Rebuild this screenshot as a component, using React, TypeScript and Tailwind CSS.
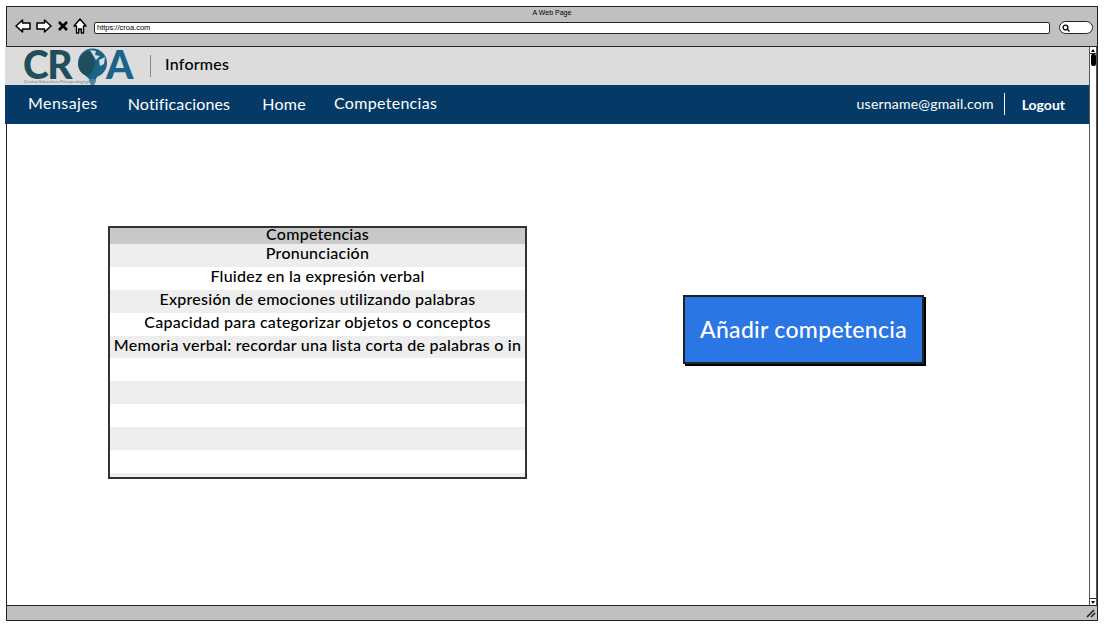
const rows = [
  "Pronunciación",
  "Fluidez en la expresión verbal",
  "Expresión de emociones utilizando palabras",
  "Capacidad para categorizar objetos o conceptos",
  "Memoria verbal: recordar una lista corta de palabras o in",
  "",
  "",
  "",
  "",
  "",
];

function BrowserIcons() {
  return (
    <div className="-mt-[4px] flex items-center text-black">
      <svg width="16" height="14" viewBox="0 0 16 14" fill="white" stroke="black" strokeWidth="1.5">
        <path d="M1 7 L7.5 1 V4 H15 V10 H7.5 V13 Z" strokeLinejoin="round" />
      </svg>
      <svg width="16" height="14" viewBox="0 0 16 14" fill="white" stroke="black" strokeWidth="1.5" className="ml-[5px]">
        <path d="M15 7 L8.5 1 V4 H1 V10 H8.5 V13 Z" strokeLinejoin="round" />
      </svg>
      <svg width="10" height="10" viewBox="0 0 10 10" stroke="black" strokeWidth="2.6" className="ml-[6px]">
        <path d="M1 1 L9 9 M9 1 L1 9" />
      </svg>
      <svg width="14" height="16" viewBox="0 0 14 16" fill="white" stroke="black" strokeWidth="1.4" className="ml-[5px]">
        <path d="M7 1 L13 8 H10.5 V15 H8.3 V11 H5.7 V15 H3.5 V8 H1 Z" strokeLinejoin="round" />
      </svg>
    </div>
  );
}

function LogoGlobe() {
  return (
    <svg width="31" height="38" viewBox="0 0 31 38" className="-mt-[3px] ml-[6px] mr-[-2px] shrink-0 self-start">
      <circle cx="15.5" cy="16" r="14.5" fill="#1b6488" />
      <path d="M1.5 18 C1.5 10 6 5 11 4 C16 8 19 14 17 21 C15 26 12 30 8 28 C4 26 1.5 23 1.5 18 Z" fill="#1f4f5a" />
      <path d="M13 3 L19 4 L18 8 L23 9 L19 13 L16 8 Z M22 13 L28 10 L27 17 L23 19 Z" fill="#dcdcdc" />
      <path d="M9 29 L21 28 L19 32 L12 32 Z" fill="#1b6488" />
      <path d="M12 33 H19 M12.5 35 H18.5 M13.5 37 H17.5" stroke="#1b6488" strokeWidth="1.3" />
    </svg>
  );
}

export default function App() {
  return (
    <div className="h-[626px] w-[1105px] overflow-hidden bg-white pl-[6px] pr-[7px] pt-[6px] font-['Lato',sans-serif] text-black">
      <div className="flex h-[615px] w-[1092px] flex-col border-[1.5px] border-[#222]">
        {/* browser chrome */}
        <div className="h-[40px] shrink-0 border-b-[1.5px] border-[#222] bg-[#c0c0c0]">
          <p className="pt-[1px] text-center font-['Liberation_Sans',sans-serif] text-[7px] leading-[9px]">A Web Page</p>
          <div className="flex items-center pl-[8px] pr-[4px] pt-[4px]">
            <BrowserIcons />
            <div className="ml-[7px] flex h-[12px] w-[957px] items-center rounded-[2px] border-[1.5px] border-[#222] bg-white pl-[2px] font-['Liberation_Sans',sans-serif] text-[7.5px]">
              https://croa.com
            </div>
            <div className="ml-[9px] flex h-[13px] w-[34px] items-center rounded-full border-[1.5px] border-[#222] bg-white pl-[2px]">
              <svg width="8" height="8" viewBox="0 0 8 8" fill="none" stroke="black" strokeWidth="1.3">
                <circle cx="3.5" cy="3.5" r="2.4" />
                <path d="M5.3 5.3 L7.5 7.5" />
              </svg>
            </div>
          </div>
        </div>

        <div className="flex min-h-0 flex-1">
          <div className="flex min-w-0 flex-1 flex-col">
            {/* header */}
            <div className="-ml-[2px] flex h-[38px] shrink-0 items-center bg-[#dcdcdc] pl-[18px]">
              <div className="relative flex h-[38px] w-[111px] items-start pt-[3px] text-[39px] font-black leading-[28px] tracking-[-1.5px]">
                <span className="text-[#1f4f5a]">CR</span>
                <LogoGlobe />
                <span className="text-[#1b6488]">A</span>
                <span className="absolute bottom-[1px] left-[1px] whitespace-nowrap text-[4.6px] font-normal leading-[6px] tracking-normal text-[#6b8290]">
                  Centro Educativo Psicopedagógico
                </span>
              </div>
              <div className="ml-[16px] h-[22px] w-px bg-[#888]" />
              <span className="-mt-[4px] ml-[14px] text-[16px] font-medium tracking-[0.25px]">Informes</span>
            </div>

            {/* nav */}
            <nav className="-ml-[2px] flex h-[39px] shrink-0 items-center bg-[#063a66] pb-[1px] text-[16px] tracking-[0.3px] text-white">
              <span className="ml-[23px] -mt-[2px] tracking-[0.45px]">Mensajes</span>
              <span className="ml-[30px] tracking-[0.15px]">Notificaciones</span>
              <span className="ml-[32px]">Home</span>
              <span className="ml-[28px] -mt-[2px]">Competencias</span>
              <span className="ml-auto -mt-[1px] text-[14px] tracking-[0.2px]">username@gmail.com</span>
              <span className="ml-[10px] mr-[17px] h-[22px] w-px bg-white" />
              <span className="mr-[24px] text-[14px] font-bold tracking-normal">Logout</span>
            </nav>

            {/* page */}
            <main className="flex flex-1 items-start bg-white pl-[101px] pt-[102px]">
              <div className="h-[253px] w-[419px] shrink-0 border-2 border-[#333]">
                <div className="h-[16px] bg-[#c8c8c8] text-center text-[16px] font-medium leading-[11px] tracking-[0.25px]">Competencias</div>
                {rows.map((row, i) => (
                  <div
                    key={i}
                    className={`overflow-hidden whitespace-nowrap text-center text-[16px] font-medium leading-[18px] tracking-[0.24px] ${i === 4 ? "h-[22px]" : "h-[23px]"} ${i % 2 === 0 ? "bg-[#eeeeee]" : "bg-white"}`}
                  >
                    {row}
                  </div>
                ))}
                <div className="h-[4px] bg-[#eeeeee]" />
              </div>
              <button className="ml-[156px] mt-[69px] flex h-[69px] w-[241px] items-center justify-center border-2 border-[#222] bg-[#2b76e5] text-[23px] font-medium tracking-[0.3px] text-white shadow-[2px_2px_0_#000]">
                Añadir competencia
              </button>
            </main>
          </div>

          {/* scrollbar */}
          <div className="flex w-[8px] shrink-0 flex-col border-x border-[#555] bg-white">
            <div className="flex h-[7px] items-center justify-center border-b border-[#222]">
              <div className="h-0 w-0 border-x-[2.5px] border-b-[3px] border-x-transparent border-b-black" />
            </div>
            <div className="mx-auto h-[12px] w-[5px] rounded-[2px] bg-black" />
            <div className="flex-1" />
            <div className="flex h-[7px] items-center justify-center border-t border-[#222]">
              <div className="h-0 w-0 border-x-[2.5px] border-t-[3px] border-x-transparent border-t-black" />
            </div>
          </div>
        </div>

        {/* status bar */}
        <div className="flex h-[15px] shrink-0 items-center justify-end border-t-[1.5px] border-[#222] bg-[#c0c0c0] pr-[1px]">
          <svg width="10" height="9" viewBox="0 0 10 9" stroke="#222" strokeWidth="1.6">
            <path d="M1 8 L8 1 M5 8 L9 4" />
          </svg>
        </div>
      </div>
    </div>
  );
}
